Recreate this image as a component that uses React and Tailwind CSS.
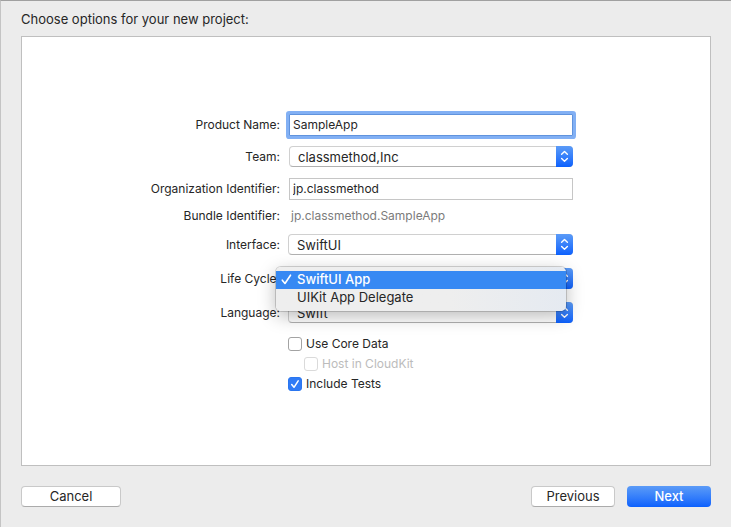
import { useState } from "react";

function Stepper() {
  return (
    <span className="pointer-events-none absolute inset-y-0 right-0 flex w-[17px] items-center justify-center rounded-r-[4px] bg-linear-to-b from-[#5b9bf7] to-[#0a60fd]">
      <svg width="9" height="13" viewBox="0 0 9 13" fill="none" stroke="white" strokeWidth="1.4" strokeLinecap="round" strokeLinejoin="round">
        <path d="M1.6 4.2 4.5 1.5 7.4 4.2M1.6 8.6 4.5 11.3 7.4 8.6" />
      </svg>
    </span>
  );
}

function Row({ id, label, className, children }) {
  return (
    <div className={`grid grid-cols-[139px_285px] items-center gap-x-2 ${className}`}>
      <label htmlFor={id} className="text-right text-xs leading-5 whitespace-nowrap">
        {label}
      </label>
      <div className="relative flex">{children}</div>
    </div>
  );
}

function Popup({ id, options, className = "" }) {
  return (
    <>
      <select
        id={id}
        className={`h-[21px] w-full appearance-none rounded-[4px] border border-[#d0d0d0] border-b-[#b0b0b0] bg-white pt-0.5 pr-5 pl-2 text-[13px] leading-[17px] outline-none ${className}`}
      >
        {options.map((option) => (
          <option key={option}>{option}</option>
        ))}
      </select>
      <Stepper />
    </>
  );
}

function Check({ label, className, disabled = false, defaultChecked = false }) {
  return (
    <label className={`flex h-5 items-center gap-1 text-xs ${disabled ? "text-[#bcbcbc]" : ""} ${className}`}>
      <span className="relative flex">
        <input
          type="checkbox"
          disabled={disabled}
          defaultChecked={defaultChecked}
          className="peer size-3.5 appearance-none rounded-[3px] border border-[#a3a3a3] bg-white checked:border-[#2a76f0] checked:bg-[#307bf6] disabled:border-[#dadada]"
        />
        <svg className="pointer-events-none absolute inset-0 hidden peer-checked:block" width="14" height="14" viewBox="0 0 14 14" fill="none" stroke="white" strokeWidth="1.5" strokeLinecap="round" strokeLinejoin="round">
          <path d="M3.7 7.6 6 10.3 10.2 3.9" />
        </svg>
      </span>
      {label}
    </label>
  );
}

function LifeCycleMenu() {
  return (
    <div
      role="listbox"
      aria-label="Life Cycle"
      className="absolute -top-px right-[7px] -left-3 z-10 rounded-[5px] bg-linear-to-r from-[#eeeeee] from-60% to-[#e5eaf1] py-1 text-[13px] leading-4 shadow-[0_0_0_1px_rgba(0,0,0,0.16),0_5px_18px_rgba(0,0,0,0.28)]"
    >
      <button type="button" role="option" aria-selected="true" className="flex h-[18px] w-full items-center bg-[#3789f3] pb-0.5 text-left font-medium text-white">
        <span className="flex w-[21px] justify-center">
          <svg width="11" height="12" viewBox="0 0 11 12" fill="none" stroke="white" strokeWidth="1.6" strokeLinecap="round" strokeLinejoin="round">
            <path d="M1.3 7.2 4 10.5 9.5 2.2" />
          </svg>
        </span>
        SwiftUI App
      </button>
      <button type="button" role="option" aria-selected="false" className="flex h-[18px] w-full items-center pb-0.5 pl-[21px] text-left">
        UIKit App Delegate
      </button>
    </div>
  );
}

const pushButton =
  "h-[21px] rounded-[4px] border border-[#c9c9c9] border-b-[#ababab] bg-white text-[13px] leading-[19px]";

const textField = "ml-px h-[22px] w-full border bg-white px-[3px] pb-0.5 text-xs outline-none";

export default function App() {
  const [product, setProduct] = useState("SampleApp");
  const [organization, setOrganization] = useState("jp.classmethod");

  return (
    <main className="flex min-h-screen flex-col border-t border-l border-t-[#a0a0a0] border-l-[#c4c4c4] bg-[#ececec] px-5 pb-5 font-['Inter','Liberation_Sans',sans-serif] text-[#262626]">
      <h1 className="flex h-[35px] items-center text-[13px] leading-5">Choose options for your new project:</h1>

      <form className="flex flex-1 flex-col items-center border border-[#bfbfbf] bg-white pt-[77px] pr-[18px] pb-10">
        <Row id="product" label="Product Name:" className="">
          <input
            id="product"
            value={product}
            onChange={(e) => setProduct(e.target.value)}
            className={`${textField} rounded-[1px] border-[#6093dd] ring-3 ring-[#82b0f4]`}
          />
        </Row>
        <Row id="team" label="Team:" className="mt-2.5">
          <Popup id="team" options={["classmethod,Inc"]} className="ml-px" />
        </Row>
        <Row id="organization" label="Organization Identifier:" className="mt-[11px]">
          <input
            id="organization"
            value={organization}
            onChange={(e) => setOrganization(e.target.value)}
            className={`${textField} border-[#c6c6c6]`}
          />
        </Row>
        <Row id="bundle" label="Bundle Identifier:" className="mt-1.5">
          <output id="bundle" className="pl-[3px] text-xs leading-5 text-[#7b7b7b]">
            {organization}.{product}
          </output>
        </Row>
        <Row id="interface" label="Interface:" className="mt-2">
          <Popup id="interface" options={["SwiftUI", "Storyboard"]} />
        </Row>
        <Row id="lifecycle" label="Life Cycle:" className="mt-[13px]">
          <Popup id="lifecycle" options={["SwiftUI App", "UIKit App Delegate"]} />
          <LifeCycleMenu />
        </Row>
        <Row id="language" label="Language:" className="mt-[13px]">
          <Popup id="language" options={["Swift"]} />
        </Row>
        <div className="mt-[11px] grid grid-cols-[139px_285px] gap-x-2">
          <Check label="Use Core Data" className="col-start-2" />
          <Check label="Host in CloudKit" className="col-start-2 pl-4" disabled />
          <Check label="Include Tests" className="col-start-2" defaultChecked />
        </div>
      </form>

      <footer className="mt-5 flex gap-3">
        <button type="button" className={`w-[100px] ${pushButton}`}>Cancel</button>
        <button type="button" className={`ml-auto w-[84px] ${pushButton}`}>Previous</button>
        <button type="button" className="h-[21px] w-[84px] rounded-[4px] bg-linear-to-b from-[#5b9bf7] to-[#0a60fd] text-[13px] leading-[21px] font-medium text-white">
          Next
        </button>
      </footer>
    </main>
  );
}
